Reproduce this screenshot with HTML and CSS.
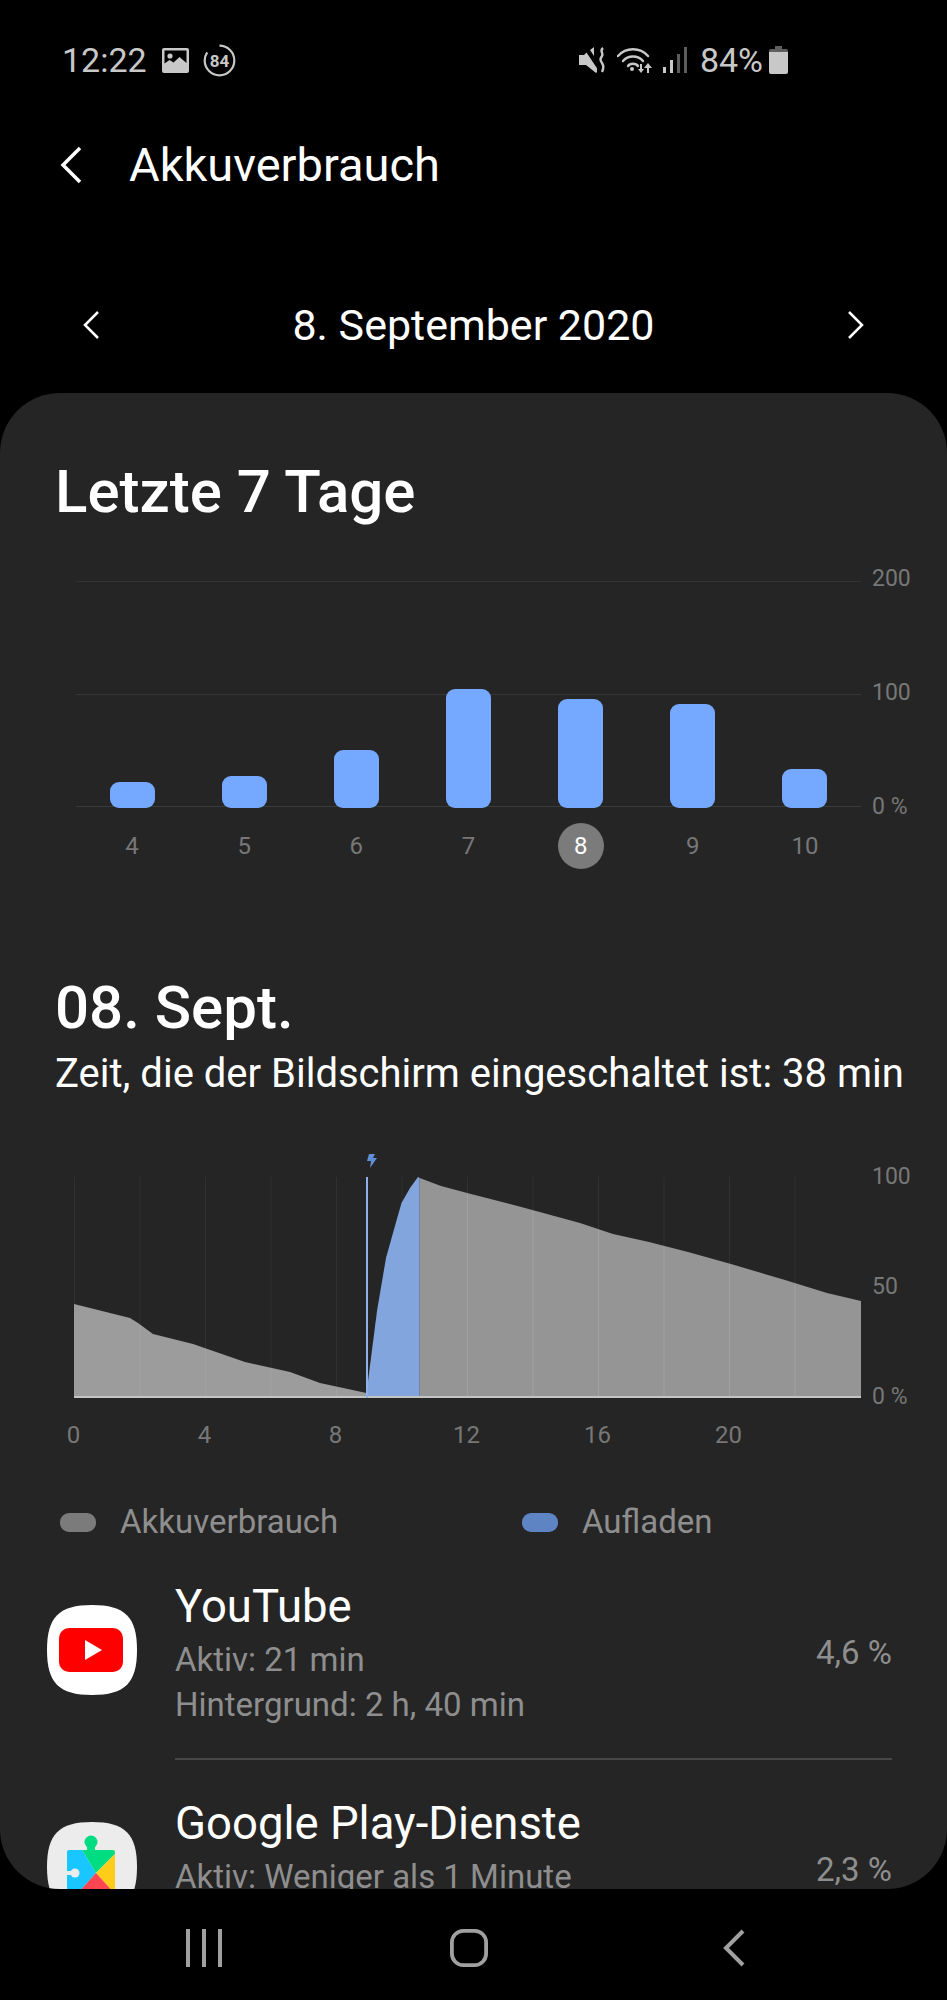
FILE: index.html
```html
<!DOCTYPE html>
<html lang="de">
<head>
    <meta charset="UTF-8">
    <meta name="viewport" content="width=device-width, initial-scale=1.0">
    <title>Akkuverbrauch</title>
    <link rel="stylesheet" href="styles.css">
</head>
<body>

    <!-- Statusleiste -->
    <div class="status-bar">
        <div class="status-left">
            <span class="clock">12:22</span>
            <svg class="icon-picture" viewBox="0 0 27 25">
                <path fill="#c8c8c8" fill-rule="evenodd" d="M2 0h23a2 2 0 0 1 2 2v21a2 2 0 0 1-2 2H2a2 2 0 0 1-2-2V2a2 2 0 0 1 2-2zM2.500 2.500v13l5-3.500 4 2.500 6-5.500 7 6V2.500z"/>
                <circle cx="8" cy="8" r="2.600" fill="#c8c8c8"/>
            </svg>
            <svg class="icon-ring" viewBox="0 0 33 33">
                <circle cx="16.500" cy="16.500" r="14.800" fill="none" stroke="#c8c8c8" stroke-width="2.200" stroke-dasharray="78 15" transform="rotate(-90 16.500 16.500)"/>
                <text x="16.500" y="22.500" text-anchor="middle" class="ring-text">84</text>
            </svg>
        </div>
        <div class="status-right">
            <svg class="icon-mute" viewBox="0 0 27 26">
                <path fill="#c8c8c8" d="M0 8h5l3-3 10 14v6l-1 1L7 18H0z"/>
                <path fill="#c8c8c8" d="M11 3l4-3v9z"/>
                <path fill="none" stroke="#000" stroke-width="2" d="M5 0l14 21"/>
                <path fill="none" stroke="#c8c8c8" stroke-width="2.400" d="M24 1c-4 3 1 5-1 8s-2 4 0 7 2 5 0 9"/>
            </svg>
            <svg class="icon-wifi" viewBox="0 0 36 27">
                <g fill="none" stroke="#c8c8c8" stroke-width="2.400" stroke-linecap="round">
                    <path d="M1 9c8-9 22-9 30 0"/>
                    <path d="M6 14c5-6 15-6 20 0"/>
                    <path d="M11 19c2-3 8-3 10 0"/>
                </g>
                <circle cx="15" cy="22" r="2" fill="#c8c8c8"/>
                <path fill="#c8c8c8" d="M23 17h2v5h2l-3 4-3-4h2zM30 26h2v-5h3l-4-5-4 5h3z"/>
            </svg>
            <svg class="icon-signal" viewBox="0 0 25 26">
                <rect x="0" y="20" width="3" height="6" fill="#c8c8c8"/>
                <rect x="7" y="13" width="3" height="13" fill="#c8c8c8"/>
                <rect x="14" y="7" width="3" height="19" fill="#5c5c5c"/>
                <rect x="21" y="0" width="3" height="26" fill="#5c5c5c"/>
            </svg>
            <span class="battery-text">84%</span>
            <svg class="icon-battery" viewBox="0 0 19 28">
                <path fill="#5f5f5f" d="M6 0h7v3h4a2 2 0 0 1 2 2v3H0V5a2 2 0 0 1 2-2h4z"/>
                <path fill="#c8c8c8" d="M0 6h19v20a2 2 0 0 1-2 2H2a2 2 0 0 1-2-2z"/>
            </svg>
        </div>
    </div>

    <!-- Kopfzeile -->
    <div class="title-row">
        <svg class="chevron-big" viewBox="0 0 22 38"><path d="M20 2L3 19l17 17"/></svg>
        <h1>Akkuverbrauch</h1>
    </div>

    <div class="date-row">
        <svg class="chevron-small" viewBox="0 0 16 28"><path d="M15 1L2 14l13 13"/></svg>
        <span class="date-text">8. September 2020</span>
        <svg class="chevron-small" viewBox="0 0 16 28"><path d="M1 1l13 13L1 27"/></svg>
    </div>

    <div class="card">
        <h2 class="heading-week">Letzte 7 Tage</h2>

        <!-- Wochendiagramm -->
        <div class="week-chart">
            <div class="week-plot">
                <div class="bar-col"><div class="bar" style="height: 26px"></div></div>
                <div class="bar-col"><div class="bar" style="height: 32px"></div></div>
                <div class="bar-col"><div class="bar" style="height: 58px"></div></div>
                <div class="bar-col"><div class="bar" style="height: 119px"></div></div>
                <div class="bar-col"><div class="bar" style="height: 109px"></div></div>
                <div class="bar-col"><div class="bar" style="height: 104px"></div></div>
                <div class="bar-col"><div class="bar" style="height: 39px"></div></div>
            </div>
            <div class="y-labels week-y">
                <span>200</span>
                <span>100</span>
                <span>0 %</span>
            </div>
        </div>
        <div class="day-row">
            <span>4</span>
            <span>5</span>
            <span>6</span>
            <span>7</span>
            <span class="day-active">8</span>
            <span>9</span>
            <span>10</span>
        </div>

        <h2 class="heading-day">08. Sept.</h2>
        <p class="screen-time">Zeit, die der Bildschirm eingeschaltet ist: 38 min</p>

        <!-- Tagesdiagramm -->
        <div class="day-chart">
            <svg class="day-plot" viewBox="0 0 787 247">
                <path stroke="#313131" stroke-width="1" d="M0.500 26V247M66 26V247M131.500 26V247M197 26V247M262.500 26V247M328 26V247M393.500 26V247M459 26V247M524.500 26V247M590 26V247M655.500 26V247M721 26V247"/>
                <path fill="#9c9c9c" d="M0 153L56 167L64 172L79 183L119 193L171 211L216 221L246 232L292.500 242V247H0z"/>
                <path fill="#83a5dd" d="M292.500 242L303 160L312 107L321.500 73L327.500 52L336 37L344 26L345.700 27V247H292.500z"/>
                <path fill="#959595" d="M345.700 27L367 35L397 43L451 57L506 72L539 83L575 91L614 101L657 113L711 129L753 142L787 150V247H345.700z"/>
                <path stroke="#a2a2a2" stroke-width="1" d="M66 175V245M131.500 198V245M197 218V245M262.500 237V245M393.500 44V245M459 60V245M524.500 79V245M590 96V245M655.500 114V245M721 133V245"/>
                <rect x="0" y="245" width="787" height="2" fill="#c4c4c4"/>
                <rect x="292" y="26" width="2" height="221" fill="#8fb0e8"/>
                <path fill="#5f8fd6" d="M295 3h6l-2 4h4l-7 10 1-7h-4z"/>
            </svg>
            <div class="y-labels day-y">
                <span>100</span>
                <span>50</span>
                <span>0 %</span>
            </div>
        </div>
        <div class="hour-row">
            <span>0</span>
            <span>4</span>
            <span>8</span>
            <span>12</span>
            <span>16</span>
            <span>20</span>
        </div>

        <div class="legend">
            <div class="legend-item">
                <span class="swatch swatch-gray"></span>
                <span>Akkuverbrauch</span>
            </div>
            <div class="legend-item">
                <span class="swatch swatch-blue"></span>
                <span>Aufladen</span>
            </div>
        </div>

        <!-- App-Liste -->
        <div class="app-row">
            <svg class="app-icon" viewBox="0 0 90 90">
                <path fill="#fff" d="M45 0C78 0 90 12 90 45S78 90 45 90 0 78 0 45 12 0 45 0z"/>
                <rect x="12" y="23" width="64" height="44" rx="10" fill="#f00"/>
                <path fill="#fff" d="M38 35l17 10-17 10z"/>
            </svg>
            <div class="app-info">
                <div class="app-name">YouTube</div>
                <div class="app-sub">Aktiv: 21 min</div>
                <div class="app-sub">Hintergrund: 2 h, 40 min</div>
            </div>
            <div class="app-percent">4,6 %</div>
        </div>
        <div class="app-divider"></div>
        <div class="app-row">
            <svg class="app-icon" viewBox="0 0 90 90">
                <path fill="#ececec" d="M45 0C78 0 90 12 90 45S78 90 45 90 0 78 0 45 12 0 45 0z"/>
                <circle cx="44" cy="20" r="6.500" fill="#00dc82"/>
                <path fill="#00dc82" d="M40 24h8v6h-8z"/>
                <path fill="#1ac6ff" d="M22 28h13l14 23-19 21H20V30a2 2 0 0 1 2-2z"/>
                <path fill="#00dc82" d="M35 28h31a2 2 0 0 1 2 2v2L49 51z"/>
                <path fill="#ffcc1a" d="M68 32v40L49 51z"/>
                <path fill="#ff4452" d="M49 51l19 21H30z"/>
                <circle cx="28" cy="51" r="4.500" fill="#ececec"/>
                <path fill="#ececec" d="M19 49h8v4h-8z"/>
            </svg>
            <div class="app-info">
                <div class="app-name">Google Play-Dienste</div>
                <div class="app-sub">Aktiv: Weniger als 1 Minute</div>
            </div>
            <div class="app-percent">2,3 %</div>
        </div>
    </div>

    <!-- Navigationsleiste -->
    <div class="nav-bar">
        <svg class="nav-recents" viewBox="0 0 36 38">
            <path d="M2 0v38M18 0v38M34 0v38"/>
        </svg>
        <svg class="nav-home" viewBox="0 0 40 40">
            <rect x="2" y="2" width="36" height="36" rx="12"/>
        </svg>
        <svg class="nav-back" viewBox="0 0 22 38">
            <path d="M20 2L3 19l17 17"/>
        </svg>
    </div>

</body>
</html>
```

FILE: styles.css
```css
* {
    box-sizing: border-box;
}
body {
    font-family: Roboto, "Liberation Sans", sans-serif;
    margin: 0;
    width: 947px;
    height: 2000px;
    overflow: hidden;
    background-color: #000;
    color: #fff;
}
svg {
    display: block;
    flex: none;
}

/* status bar */
.status-bar {
    height: 120px;
    padding: 0 159px 0 62px;
    display: flex;
    align-items: center;
    justify-content: space-between;
    color: #c8c8c8;
    font-size: 34px;
}
.status-left,
.status-right {
    display: flex;
    align-items: center;
}
.icon-picture {
    width: 27px;
    height: 25px;
    margin-left: 15px;
}
.icon-ring {
    width: 33px;
    height: 33px;
    margin-left: 14px;
}
.ring-text {
    font-size: 17px;
    font-weight: 700;
    fill: #c8c8c8;
}
.icon-mute {
    width: 27px;
    height: 26px;
}
.icon-wifi {
    width: 36px;
    height: 27px;
    margin-left: 11px;
}
.icon-signal {
    width: 25px;
    height: 26px;
    margin-left: 10px;
}
.battery-text {
    margin-left: 12px;
}
.icon-battery {
    width: 19px;
    height: 28px;
    margin-left: 6px;
}

/* title */
.title-row {
    height: 90px;
    padding-left: 60px;
    display: flex;
    align-items: center;
}
.chevron-big {
    width: 22px;
    height: 38px;
    fill: none;
    stroke: #fff;
    stroke-width: 3.500;
}
h1 {
    margin: -2px 0 0 47px;
    font-size: 47px;
    font-weight: 400;
}
.date-row {
    height: 120px;
    margin: 55px 0 8px;
    padding: 0 83px;
    display: flex;
    align-items: center;
    justify-content: space-between;
}
.chevron-small {
    width: 16px;
    height: 28px;
    fill: none;
    stroke: #fff;
    stroke-width: 2.500;
}
.date-text {
    font-size: 43px;
}

/* card */
.card {
    height: 1496px;
    background-color: #252525;
    border-radius: 60px;
    overflow: hidden;
    padding-top: 64px;
}
h2 {
    margin: 0;
    padding-left: 55px;
    font-size: 60px;
    font-weight: 500;
    line-height: 70px;
}
.week-chart {
    height: 228px;
    margin: 53px 0 0 76px;
    display: flex;
}
.week-plot {
    width: 785px;
    height: 228px;
    display: flex;
    align-items: flex-end;
    background:
        linear-gradient(#323232, #323232) 0 1px / 785px 1px no-repeat,
        linear-gradient(#363636, #363636) 0 114px / 785px 1px no-repeat,
        linear-gradient(#3a3a3a, #3a3a3a) 0 226px / 785px 1px no-repeat;
}
.bar-col {
    flex: 1;
    display: flex;
    justify-content: center;
}
.bar {
    width: 45px;
    background-color: #75a8ff;
    border-radius: 9px;
}
.y-labels {
    display: flex;
    flex-direction: column;
    justify-content: space-between;
    margin-left: 11px;
    font-size: 23px;
    line-height: 30px;
    color: #777;
}
.week-y {
    height: 258px;
    margin-top: -16px;
}
.day-row {
    width: 785px;
    margin: 15px 0 0 76px;
    display: flex;
    font-size: 24px;
    color: #777;
}
.day-row span {
    flex: 1;
    height: 46px;
    line-height: 46px;
    text-align: center;
}
.day-row .day-active {
    flex: none;
    width: 46px;
    margin: 0 33.100px;
    border-radius: 50%;
    background-color: #7b7b7b;
    color: #fff;
}
.heading-day {
    margin-top: 104px;
}
.screen-time {
    margin: 6px 0 0;
    padding-left: 55px;
    font-size: 40px;
    line-height: 50px;
}
.day-chart {
    height: 247px;
    margin: 52px 0 0 74px;
    display: flex;
}
.day-plot {
    width: 787px;
    height: 247px;
}
.day-y {
    height: 250px;
    margin-left: 11px;
    margin-top: 11px;
}
.hour-row {
    margin: 22px 0 0 8px;
    display: flex;
    font-size: 24px;
    line-height: 30px;
    color: #777;
}
.hour-row span {
    width: 131px;
    text-align: center;
}
.legend {
    margin: 50px 0 0 60px;
    display: flex;
    font-size: 33px;
    line-height: 44px;
    color: #8e8e8e;
}
.legend-item {
    flex: none;
    width: 462px;
    display: flex;
    align-items: center;
    gap: 24px;
}
.swatch {
    width: 36px;
    height: 19px;
    border-radius: 9px;
}
.swatch-gray {
    background-color: #7b7b7b;
}
.swatch-blue {
    background-color: #5f84c4;
}

/* app list */
.app-row {
    height: 177px;
    padding: 24px 55px 0 47px;
    display: flex;
    align-items: flex-start;
}
.legend + .app-row {
    margin-top: 37px;
}
.app-divider + .app-row {
    margin-top: 38px;
}
.app-icon {
    width: 90px;
    height: 90px;
}
.app-info {
    flex: 1;
    margin-left: 38px;
    margin-top: -24px;
}
.app-name {
    font-size: 45.500px;
    line-height: 52px;
    margin-bottom: 4px;
}
.app-sub {
    font-size: 33px;
    line-height: 45px;
    color: #8e8e8e;
}
.app-percent {
    font-size: 33px;
    line-height: 40px;
    margin-top: 28px;
    color: #8e8e8e;
}
.app-divider {
    height: 2px;
    margin: 0 55px 0 175px;
    background-color: #484848;
}

/* navigation */
.nav-bar {
    height: 111px;
    padding: 40px 0 0 186px;
    display: flex;
    align-items: flex-start;
}
.nav-bar svg {
    fill: none;
    stroke: #a0a0a0;
    stroke-width: 4;
    height: 38px;
}
.nav-recents {
    width: 36px;
}
.nav-home {
    width: 40px;
    margin-left: 227px;
}
.nav-back {
    width: 22px;
    margin-left: 234px;
}
```
